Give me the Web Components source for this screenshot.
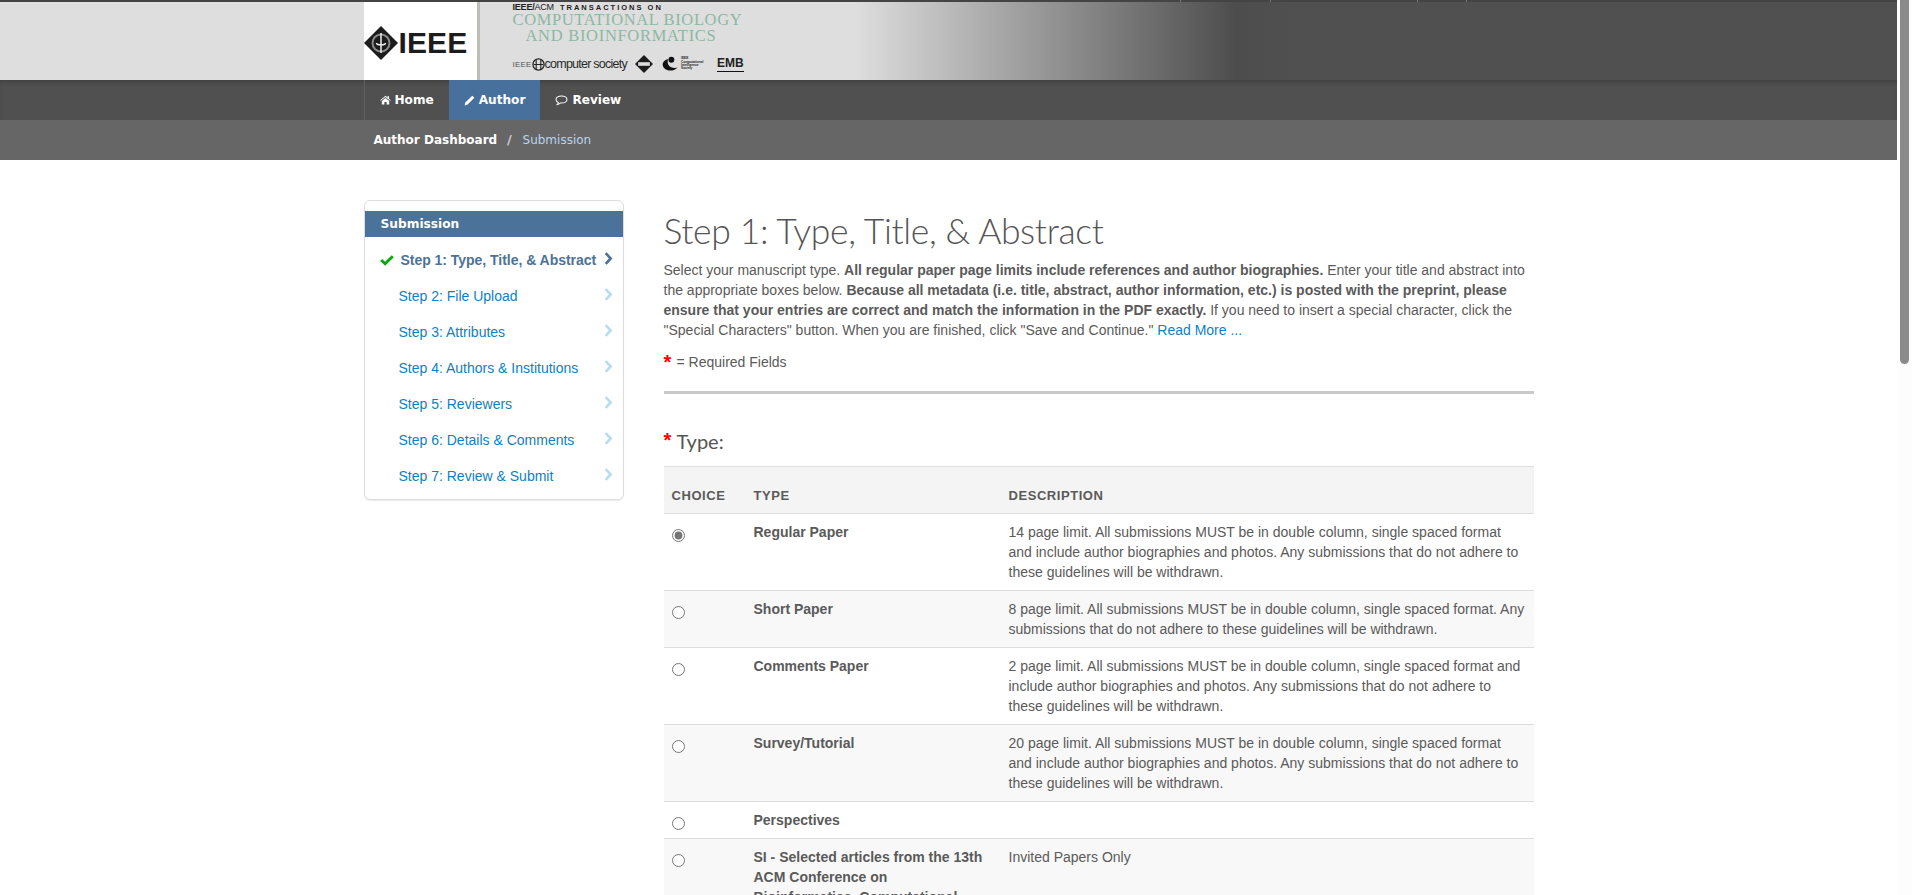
<!DOCTYPE html>
<html>
<head>
<meta charset="utf-8">
<title>Submission</title>
<style>
  html, body { margin: 0; height: 100%; overflow: hidden; background: #fff; }
  body { display: flex; font: 14px/20px "Liberation Sans", Arial, sans-serif; color: #5a5a5a; }
</style>
</head>
<body>
<script>
const icons = {
  home: `<svg viewBox="0 0 14 12" width="11" height="10"><path fill="currentColor" d="M7 .6.3 6.2l.7.8L7 2.1 13 7l.7-.8-2.4-2V1h-1.600v1.800zM2.300 7.200V11.600h3.300V8.400h2.800v3.200h3.300V7.200L7 3.400z"/></svg>`,
  pencil: `<svg viewBox="0 0 12 12" width="11" height="11"><path fill="currentColor" d="M9 .7 11.300 3 4 10.300.6 11.400 1.700 8z"/></svg>`,
  comment: `<svg viewBox="0 0 14 12" width="13" height="11"><path fill="none" stroke="currentColor" stroke-width="1.100" d="M7 1C3.700 1 1 2.700 1 4.900c0 1.300 1 2.500 2.500 3.200-.1.9-.6 1.800-1.200 2.400 1.300-.2 2.500-.9 3.300-1.800.5.1.9.1 1.400.1 3.300 0 6-1.700 6-3.900S10.300 1 7 1z"/></svg>`,
  check: `<svg viewBox="0 0 14 11" width="14" height="11"><path fill="#0aa80a" d="M5.100 10.800 .2 6 2.200 4l2.900 2.800L11.800.2 13.800 2.200z"/></svg>`,
  chevron: `<svg viewBox="0 0 9 13" width="9" height="13"><path fill="none" stroke="currentColor" stroke-width="2.600" d="m1.700 1.200 5 5.300-5 5.300"/></svg>`
};

class JournalBanner extends HTMLElement {
  constructor() {
    super();
    this.attachShadow({ mode: "open" });
  }

  connectedCallback() {
    this.shadowRoot.innerHTML = `
      <style>
        :host {
          display: block;
          height: 80px;
          box-sizing: border-box;
          background: linear-gradient(90deg, #dedede 0, #dedede 855px, #4d4d4d 1236px, #505050 1300px);
        }
        .strip {
          height: 2px;
          display: flex;
          background: #444;
        }
        .strip i { border-right: 1px solid #777; }
        .wrap {
          width: 1170px;
          height: 78px;
          margin: 0 auto;
          display: flex;
        }
        .ieee {
          width: 113px;
          height: 74px;
          background: #fff;
          border-right: 3px solid #bcbdb5;
          display: flex;
          align-items: center;
          gap: 1px;
          padding-top: 4px;
        }
        .ieee svg { flex: none; }
        .ieee b {
          font: bold 30px/1 "Liberation Sans", sans-serif;
          color: #1c1c1c;
          letter-spacing: .1px;
        }
        .art {
          margin-left: 33px;
          display: flex;
          flex-direction: column;
          color: #222;
        }
        .over {
          font: 9px/9px "Liberation Sans", sans-serif;
          height: 9px;
          margin-top: 1px;
          letter-spacing: -.2px;
          white-space: nowrap;
        }
        .over b { font-weight: bold; }
        .over span { font-weight: bold; font-size: 7.500px; letter-spacing: 2px; margin-left: 6px; }
        .title {
          font: 16.500px/15px "Liberation Serif", serif;
          color: #8db7a3;
          letter-spacing: .62px;
          white-space: pre;
        }
        .title + .title { padding-left: 13px; letter-spacing: .7px; margin-top: 1px; }
        .socs {
          margin-top: 10px;
          display: flex;
          align-items: center;
          height: 22px;
          white-space: nowrap;
        }
        .socs .e { font: 8px "Liberation Sans", sans-serif; color: #555; letter-spacing: .2px; }
        .socs .cs { font: 12.500px "Liberation Sans", sans-serif; letter-spacing: -.75px; color: #2a2a2a; }
        .socs .ci { font: bold 3.200px/3.400px "Liberation Sans", sans-serif; width: 27px; margin-left: 2px; }
        .socs .emb { font: bold 12px/13px "Liberation Sans", sans-serif; border-bottom: 1px solid #111; margin-left: 9px; padding-bottom: 1px; }
      </style>
      <div class="strip">
        <i style="width:1180px"></i><i style="width:89px"></i><i style="width:146px"></i><i style="width:48px"></i>
      </div>
      <div class="wrap">
        <div class="ieee">
          <svg viewBox="0 0 34 34" width="34" height="34">
            <path fill="#1c1c1c" d="M17 0 34 17 17 34 0 17z"/>
            <circle cx="17" cy="17" r="9.500" fill="#8a8a8a"/>
            <circle cx="17" cy="17" r="7.500" fill="#1c1c1c"/>
            <path fill="none" stroke="#eee" stroke-width="1.500" d="M17 7v20M12.500 17c0 2.500 9 2.500 9 0"/>
          </svg>
          <b>IEEE</b>
        </div>
        <div class="art">
          <div class="over"><b>IEEE/</b>ACM<span>TRANSACTIONS ON</span></div>
          <div class="title">COMPUTATIONAL BIOLOGY</div>
          <div class="title">AND BIOINFORMATICS</div>
          <div class="socs">
            <span class="e">IEEE</span>
            <svg viewBox="0 0 14 14" width="13" height="13"><circle cx="7" cy="7" r="6" fill="none" stroke="#222" stroke-width="1.400"/><path stroke="#222" stroke-width="1.200" d="M4.500 2v10M9.500 2v10M2 7h10"/></svg>
            <span class="cs">computer society</span>
            <svg viewBox="0 0 20 20" width="18" height="18" style="margin-left:8px"><path fill="#1c1c1c" d="M10 0 20 10 10 20 0 10z"/><path fill="#ddd" d="M3.500 8h13v4h-13z"/></svg>
            <svg viewBox="0 0 20 18" width="17" height="16" style="margin-left:9px"><circle cx="11" cy="4" r="3.500" fill="#111"/><path fill="#111" d="M7 3C3 4 0 7 1 11c1 4 6 6.500 11 5.500 3-.6 5-2 6-3.500-5 1.500-9 0-10.500-3C6.500 8 6.500 5 7 3z"/></svg>
            <span class="ci">IEEE<br>Computational<br>Intelligence<br>Society</span>
            <span class="emb">EMB</span>
          </div>
        </div>
      </div>
    `;
  }
}

class MainNav extends HTMLElement {
  constructor() {
    super();
    this.attachShadow({ mode: "open" });
  }

  connectedCallback() {
    this.shadowRoot.innerHTML = `
      <style>
        :host {
          display: block;
          height: 40px;
          background: #505050;
          box-shadow: inset 0 4px 4px -2px #3f3f3f;
        }
        nav {
          width: 1170px;
          height: 40px;
          margin: 0 auto;
          display: flex;
          font: bold 12.100px/40px "DejaVu Sans", Verdana, sans-serif;
          color: #fff;
        }
        a { display: flex; align-items: center; gap: 4px; padding: 0 15px; }
        a:first-child { border-left: 1px solid #5f5f5f; }
        .on { background: #47719c; }
        a svg { flex: none; }
      </style>
      <nav>
        <a>${icons.home}Home</a>
        <a class="on">${icons.pencil}Author</a>
        <a>${icons.comment}Review</a>
      </nav>
    `;
  }
}

class CrumbBar extends HTMLElement {
  constructor() {
    super();
    this.attachShadow({ mode: "open" });
  }

  connectedCallback() {
    this.shadowRoot.innerHTML = `
      <style>
        :host { display: block; height: 40px; background: #666; }
        div {
          width: 1170px;
          margin: 0 auto;
          padding-left: 10px;
          box-sizing: border-box;
          font: 12px/40px "DejaVu Sans", Verdana, sans-serif;
          color: #b7d4f0;
          white-space: nowrap;
        }
        b { color: #fff; }
        span { color: #ccc; margin: 0 7px 0 6px; font-weight: bold; font-size: 13px; }
      </style>
      <div><b>Author Dashboard</b> <span>/</span> Submission</div>
    `;
  }
}

class StepMenu extends HTMLElement {
  constructor() {
    super();
    this.attachShadow({ mode: "open" });
  }

  connectedCallback() {
    this.shadowRoot.innerHTML = `
      <style>
        :host {
          display: block;
          width: 260px;
          box-sizing: border-box;
          border: 1px solid #ddd;
          border-radius: 6px;
          box-shadow: 0 1px 1px rgba(0,0,0,.08);
          padding: 10px 0 5px;
          background: #fff;
        }
        h4 {
          margin: 0 0 5px;
          height: 26px;
          background: #4b7299;
          color: #fff;
          font: bold 12.200px/26px "DejaVu Sans", Verdana, sans-serif;
          padding-left: 16px;
        }
      </style>
      <h4>Submission</h4>
      <slot></slot>
    `;
  }
}

class StepItem extends HTMLElement {
  constructor() {
    super();
    this.attachShadow({ mode: "open" });
  }

  connectedCallback() {
    const current = this.hasAttribute("current");
    this.shadowRoot.innerHTML = `
      <style>
        :host {
          display: flex;
          align-items: center;
          height: 36px;
          padding-left: ${current ? 15 : 34}px;
          color: ${current ? "#4b7299" : "#0f80c4"};
          font: ${current ? "bold " : ""}14px/20px "Liberation Sans", sans-serif;
          letter-spacing: ${current ? "-.03px" : "0"};
          white-space: nowrap;
        }
        .check { display: flex; margin-right: 7px; }
        .label { flex: 1; }
        .chev { display: flex; margin: -4px 10px 0 0; color: ${current ? "#4b7299" : "#b9dbec"}; }
      </style>
      ${current ? `<span class="check">${icons.check}</span>` : ""}
      <span class="label"><slot></slot></span>
      <span class="chev">${icons.chevron}</span>
    `;
  }
}

class RequiredMark extends HTMLElement {
  constructor() {
    super();
    this.attachShadow({ mode: "open" });
  }

  connectedCallback() {
    this.shadowRoot.innerHTML = `
      <style>
        :host {
          display: inline-block;
          color: #f00;
          font: bold 20px/14px "Liberation Sans", sans-serif;
          width: 13px;
        }
      </style>*`;
  }
}

class StepIntro extends HTMLElement {
  constructor() {
    super();
    this.attachShadow({ mode: "open" });
  }

  connectedCallback() {
    this.shadowRoot.innerHTML = `
      <style>
        :host { display: block; }
        h1 {
          margin: 0;
          font: 300 35.500px/40px Lato, sans-serif;
          letter-spacing: -.36px;
          color: #555;
          height: 60px;
          padding-top: 11px;
          box-sizing: border-box;
        }
        p { margin: 0; white-space: nowrap; }
        a { color: #0f80c4; }
        .req { margin-top: 12px; height: 20px; display: flex; align-items: center; }
        hr { margin: 19px 0 0; border: 0; height: 3px; background: #c8c8c8; }
        h3 {
          margin: 35px 0 0;
          display: flex;
          font: 400 20px/24px Lato, sans-serif;
          color: #555;
          height: 37px;
        }
        h3 required-mark { padding-top: 4px; }
      </style>
      <h1>Step 1: Type, Title, &amp; Abstract</h1>
      <p>Select your manuscript type. <b>All regular paper page limits include references and author biographies.</b> Enter your title and abstract into<br>
      the appropriate boxes below. <b>Because all metadata (i.e. title, abstract, author information, etc.) is posted with the preprint, please<br>
      ensure that your entries are correct and match the information in the PDF exactly.</b> If you need to insert a special character, click the<br>
      "Special Characters" button. When you are finished, click "Save and Continue." <a>Read More ...</a></p>
      <div class="req"><required-mark></required-mark>= Required Fields</div>
      <hr>
      <h3><required-mark></required-mark>Type:</h3>
    `;
  }
}

class TypeTable extends HTMLElement {
  constructor() {
    super();
    this.attachShadow({ mode: "open" });
  }

  connectedCallback() {
    this.shadowRoot.innerHTML = `
      <style>
        :host { display: block; border-top: 1px solid #ddd; }
        .head {
          display: grid;
          grid-template-columns: 82px 255px 533px;
          background: #f4f4f4;
          border-bottom: 1px solid #ddd;
          font: bold 13px/20px "Liberation Sans", sans-serif;
          padding: 19px 0 6px;
          box-sizing: border-box;
          height: 47px;
          letter-spacing: .55px;
        }
        .head span { padding: 0 8px; }
      </style>
      <div class="head"><span>CHOICE</span><span>TYPE</span><span>DESCRIPTION</span></div>
      <slot></slot>
    `;
  }
}

class TypeRow extends HTMLElement {
  constructor() {
    super();
    this.attachShadow({ mode: "open" });
  }

  connectedCallback() {
    const checked = this.hasAttribute("checked") ? "checked" : "";
    this.shadowRoot.innerHTML = `
      <style>
        :host {
          display: grid;
          grid-template-columns: 82px 255px 533px;
          border-bottom: 1px solid #ddd;
          font: 14px/20px "Liberation Sans", sans-serif;
        }
        :host([striped]) { background: #f8f8f8; }
        .cell { padding: 8px; }
        .name { font-weight: bold; padding-right: 9px; }
        .desc { white-space: nowrap; }
        input { margin: 7px 0 0 0; width: 13px; height: 13px; accent-color: #767676; display: block; }
      </style>
      <div class="cell"><input type="radio" name="ms-type" ${checked} tabindex="-1"></div>
      <div class="cell name">${this.getAttribute("name")}</div>
      <div class="cell desc"><slot></slot></div>
    `;
  }
}

class PageScrollbar extends HTMLElement {
  constructor() {
    super();
    this.attachShadow({ mode: "open" });
  }

  connectedCallback() {
    this.shadowRoot.innerHTML = `
      <style>
        :host { display: block; flex: none; width: 15px; height: 100%; background: #fdfdfd; }
        div { width: 9px; height: 364px; margin-left: 3px; background: #8a8a8a; border-radius: 0 0 5px 5px; }
      </style>
      <div></div>
    `;
  }
}

class SubmissionPage extends HTMLElement {
  constructor() {
    super();
    this.attachShadow({ mode: "open" });
  }

  connectedCallback() {
    this.shadowRoot.innerHTML = `
      <style>
        :host { display: block; flex: 1; min-width: 0; height: 100%; overflow: hidden; }
        .body {
          width: 1170px;
          margin: 0 auto;
          padding-top: 40px;
          display: flex;
          align-items: flex-start;
          gap: 40px;
        }
        .left { flex: none; width: 260px; }
        .main { flex: none; width: 870px; }
      </style>
      <journal-banner></journal-banner>
      <main-nav></main-nav>
      <crumb-bar></crumb-bar>
      <div class="body">
        <div class="left"><slot name="menu"></slot></div>
        <div class="main"><step-intro></step-intro><slot name="table"></slot></div>
      </div>
    `;
  }
}

customElements.define("journal-banner", JournalBanner);
customElements.define("main-nav", MainNav);
customElements.define("crumb-bar", CrumbBar);
customElements.define("step-menu", StepMenu);
customElements.define("step-item", StepItem);
customElements.define("required-mark", RequiredMark);
customElements.define("step-intro", StepIntro);
customElements.define("type-table", TypeTable);
customElements.define("type-row", TypeRow);
customElements.define("page-scrollbar", PageScrollbar);
customElements.define("submission-page", SubmissionPage);

document.body.insertAdjacentHTML("beforeend", `
  <submission-page>
    <step-menu slot="menu">
      <step-item current>Step 1: Type, Title, &amp; Abstract</step-item>
      <step-item>Step 2: File Upload</step-item>
      <step-item>Step 3: Attributes</step-item>
      <step-item>Step 4: Authors &amp; Institutions</step-item>
      <step-item>Step 5: Reviewers</step-item>
      <step-item>Step 6: Details &amp; Comments</step-item>
      <step-item>Step 7: Review &amp; Submit</step-item>
    </step-menu>
    <type-table slot="table">
      <type-row checked name="Regular Paper">14 page limit. All submissions MUST be in double column, single spaced format<br>and include author biographies and photos. Any submissions that do not adhere to<br>these guidelines will be withdrawn.</type-row>
      <type-row striped name="Short Paper">8 page limit. All submissions MUST be in double column, single spaced format. Any<br>submissions that do not adhere to these guidelines will be withdrawn.</type-row>
      <type-row name="Comments Paper">2 page limit. All submissions MUST be in double column, single spaced format and<br>include author biographies and photos. Any submissions that do not adhere to<br>these guidelines will be withdrawn.</type-row>
      <type-row striped name="Survey/Tutorial">20 page limit. All submissions MUST be in double column, single spaced format<br>and include author biographies and photos. Any submissions that do not adhere to<br>these guidelines will be withdrawn.</type-row>
      <type-row name="Perspectives"></type-row>
      <type-row striped name="SI - Selected articles from the 13th ACM Conference on Bioinformatics, Computational Biology, and Health Informatics">Invited Papers Only</type-row>
    </type-table>
  </submission-page>
  <page-scrollbar></page-scrollbar>
`);
</script>
</body>
</html>
